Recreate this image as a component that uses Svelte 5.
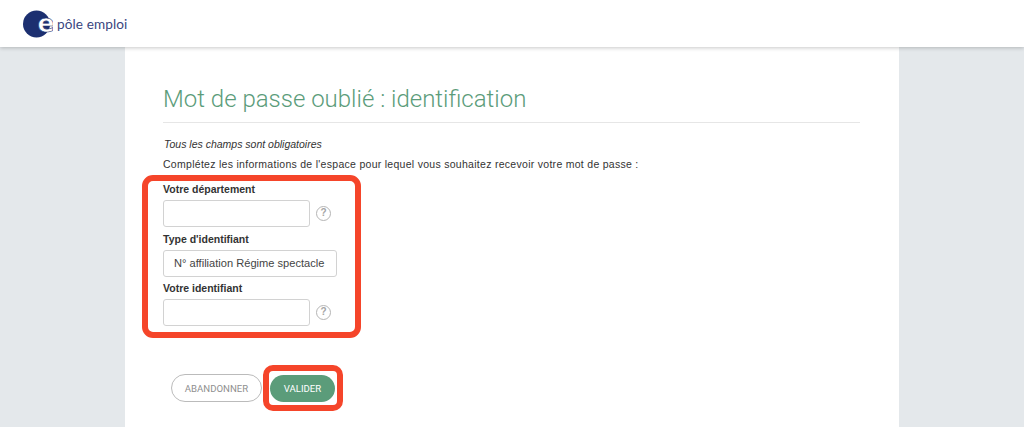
<script>
  // Champs du formulaire, dans l'ordre d'affichage
  const fields = [
    { label: 'Votre département', help: true },
    { label: "Type d'identifiant", value: "N° affiliation Régime spectacle" },
    { label: 'Votre identifiant', help: true }
  ];
</script>

<header class="topbar">
  <div class="logo">
    <svg class="logo-mark" width="30" height="28" viewBox="0 0 30 28" aria-hidden="true">
      <circle cx="13.5" cy="14" r="13.5" fill="#1c2f70" />
      <text x="14.5" y="22" class="logo-e">e</text>
    </svg>
    <span class="logo-text">pôle emploi</span>
  </div>
</header>

<main class="page">
  <h1>Mot de passe oublié : identification</h1>
  <p class="required">Tous les champs sont obligatoires</p>
  <p class="intro">Complétez les informations de l'espace pour lequel vous souhaitez recevoir votre mot de passe :</p>

  <div class="highlight fields">
    {#each fields as field}
      <label class="field-label" for={field.label}>{field.label}</label>
      <div class="field-row">
        {#if field.value}
          <input id={field.label} class="input wide" value={field.value} readonly />
        {:else}
          <input id={field.label} class="input" />
        {/if}
        {#if field.help}
          <span class="help">?</span>
        {/if}
      </div>
    {/each}
  </div>

  <div class="actions">
    <button class="btn ghost">ABANDONNER</button>
    <div class="highlight btn-wrap">
      <button class="btn primary">VALIDER</button>
    </div>
  </div>
</main>

<style>
  :global(body) {
    background: #e4e8eb;
    font-family: "Liberation Sans", Arial, sans-serif;
    color: #333;
    overflow: hidden;
  }

  .topbar {
    height: 47px;
    background: #fff;
    box-shadow: 0 1px 4px rgba(0, 0, 0, 0.22);
    position: relative;
    display: flex;
    align-items: center;
    padding-left: 23px;
  }

  .logo {
    display: flex;
    align-items: center;
    gap: 4px;
  }

  .logo-e {
    font-family: "DejaVu Sans", sans-serif;
    font-size: 25px;
    font-weight: 700;
    fill: #fff;
    stroke: #1c2f70;
    stroke-width: 0.6px;
  }

  .logo-text {
    font-family: Lato, sans-serif;
    font-size: 13.6px;
    color: #3a4680;
    letter-spacing: 0.1px;
  }

  .page {
    width: 774px;
    height: 380px;
    margin-left: 125px;
    padding: 36px 39px 0 38px;
    box-sizing: border-box;
    background: #fff;
    overflow: hidden;
  }

  h1 {
    margin: 0;
    padding: 1px 0 7px;
    height: 31px;
    line-height: 31px;
    box-sizing: content-box;
    border-bottom: 1px solid #e6e6e6;
    font-family: Roboto, sans-serif;
    font-size: 24px;
    font-weight: 300;
    color: #5b9c7a;
  }

  .required {
    margin: 15px 0 0 1px;
    font-size: 10.5px;
    line-height: 13px;
    font-style: italic;
  }

  .intro {
    margin: 7px 0 0;
    font-size: 10.5px;
    letter-spacing: 0.285px;
    line-height: 13px;
  }

  .highlight {
    border: 6px solid #f5452a;
    box-sizing: border-box;
  }

  .fields {
    width: 219px;
    height: 163px;
    margin: 4px 0 0 -21px;
    padding: 2px 15px 0;
    border-radius: 11px;
  }

  .field-label {
    display: block;
    font-size: 10.5px;
    font-weight: 700;
    line-height: 13px;
    margin-bottom: 4px;
  }

  .field-row {
    display: flex;
    align-items: center;
    gap: 6px;
    height: 27px;
    margin-bottom: 5.5px;
  }

  .input {
    width: 147px;
    height: 27px;
    box-sizing: border-box;
    border: 1px solid #d2d2d2;
    border-radius: 3px;
    padding: 0 0 0 9px;
    background: #fff;
    font-family: inherit;
    font-size: 11.1px;
    color: #444;
  }

  .wide {
    width: 174px;
    padding-left: 10px;
  }

  .help {
    width: 15px;
    height: 15px;
    box-sizing: border-box;
    border: 1.5px solid #b5b5b5;
    border-radius: 50%;
    color: #a5a5a5;
    font-size: 10px;
    font-weight: 700;
    line-height: 12px;
    text-align: center;
  }

  .actions {
    display: flex;
    align-items: center;
    gap: 1px;
    margin: 27px 0 0 8px;
  }

  .btn-wrap {
    width: 80px;
    height: 46px;
    padding: 4px 1px;
    border-radius: 10px;
  }

  .btn {
    height: 28px;
    border-radius: 14px;
    font-family: Roboto, sans-serif;
    font-size: 9.6px;
    padding: 0;
  }

  .ghost {
    width: 91px;
    background: #fff;
    border: 1px solid #bbb;
    color: #8f8f8f;
  }

  .primary {
    width: 65px;
    height: 27px;
    background: #5b9c7a;
    border: none;
    color: #fff;
  }
</style>
